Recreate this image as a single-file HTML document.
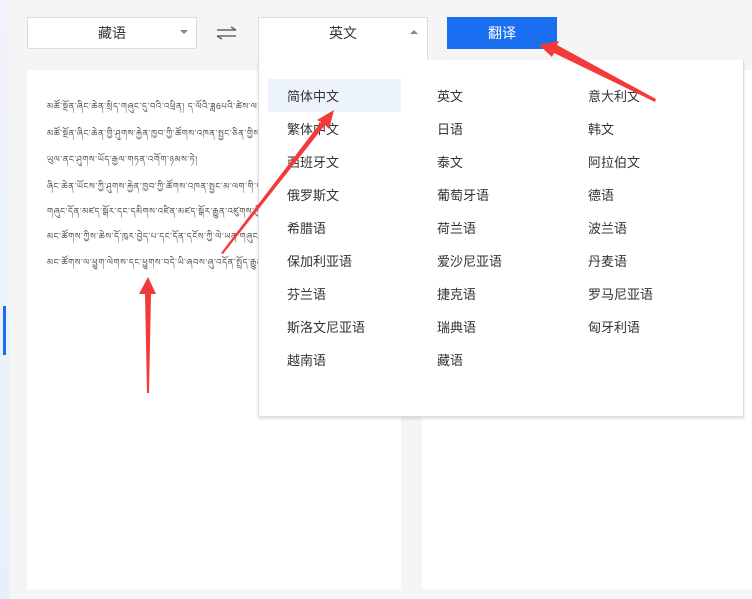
<!DOCTYPE html>
<html><head><meta charset="utf-8"><style>
body{margin:0;width:752px;height:599px;background:#f5f5f5;position:relative;overflow:hidden;font-family:"Liberation Sans","Noto Sans CJK SC",sans-serif;color:#333}
.a{position:absolute}
.sel{background:#fff;border:1px solid #ddd;box-sizing:border-box;font-size:14px;text-align:center;line-height:31px}
.tib{font-size:8.5px;color:#444;left:47px;white-space:nowrap;width:350px;overflow:hidden;letter-spacing:0.6px}
.it{position:absolute;font-size:13px;color:#333}
</style></head><body>
<div class="a" style="left:0;top:0;width:9px;height:599px;background:linear-gradient(#f0f3f8,#e6f0fb)"></div>
<div class="a" style="left:3px;top:306px;width:3px;height:49px;background:#1a6ff0"></div>
<div class="a sel" style="left:27px;top:17px;width:170px;height:32px">藏语</div>
<div class="a" style="left:180px;top:30px;border:4px solid transparent;border-top:4px solid #888;border-bottom:none"></div>
<svg class="a" style="left:216px;top:26px" width="22" height="14"><path d="M1 4H20M15 1L20 4M1 10H20M1 10L6 13" stroke="#666" stroke-width="1.6" fill="none"/></svg>
<div class="a sel" style="left:258px;top:17px;width:170px;height:44px;border-bottom:none;line-height:31px">英文</div>
<div class="a" style="left:410px;top:30px;border:4px solid transparent;border-bottom:4px solid #888;border-top:none"></div>
<div class="a" style="left:447px;top:17px;width:110px;height:32px;background:#1a6ff0;color:#fff;font-size:14px;text-align:center;line-height:32px">翻译</div>
<div class="a" style="left:27px;top:70px;width:374px;height:519px;background:#fff"></div>
<div class="a" style="left:422px;top:70px;width:330px;height:519px;background:#fff"></div>
<div class="a tib" style="top:98px">མཚོ་སྔོན་ཞིང་ཆེན་སྲིད་གཞུང་དུ་བའི་འཕྲིན། ད་ལོའི་ཟླ6པའི་ཚེས་ལ།</div>
<div class="a tib" style="top:125px">མཚོ་སྔོན་ཞིང་ཆེན་གྱི་ཤུགས་རྐྱེན་ཁྱབ་ཀྱི་ཚོགས་འཁན་སྤྱང་ཅིན་གྱིས་ཡུལ་ནང་</div>
<div class="a tib" style="top:151px">ཡུལ་ནང་ཤུགས་ཡོད་རྒྱལ་གཏན་འགོག་ཉམས་ཏེ།</div>
<div class="a tib" style="top:178px">ཞིང་ཆེན་ཡོངས་ཀྱི་ཤུགས་རྐྱེན་ཁྱབ་ཀྱི་ཚོགས་འཁན་སྤྱང་མ་ལག་གི་གཞུང་</div>
<div class="a tib" style="top:203px">གཞུང་དོན་མཛད་སྒོར་དང་དམིགས་འཛིན་མཛད་སྒོར་རྒྱུན་འཛུགས་ཀྱི་</div>
<div class="a tib" style="top:228px">མང་ཚོགས་ཀྱིས་ཆེས་དོ་ཁུར་བྱེད་པ་དང་དོན་དངོས་ཀྱི་ལེ་ཡན་གཞུང་དོན་</div>
<div class="a tib" style="top:254px">མང་ཚོགས་ལ་ཕྱུག་ལེགས་དང་ཕྱུགས་བདེ་ཡི་ཞབས་ཞུ་འདོན་སྤྲོད་རྒྱུན་</div>
<div class="a" style="left:258px;top:60px;width:486px;height:357px;background:#fff;border:1px solid #ddd;border-top:none;box-sizing:border-box;box-shadow:0 2px 3px rgba(0,0,0,.12)">
<div class="a" style="left:9px;top:19px;width:133px;height:33px;background:#ecf3fd"></div>
<div class="it" style="left:28px;top:26px">简体中文</div><div class="it" style="left:178px;top:26px">英文</div><div class="it" style="left:329px;top:26px">意大利文</div>
<div class="it" style="left:28px;top:59px">繁体中文</div><div class="it" style="left:178px;top:59px">日语</div><div class="it" style="left:329px;top:59px">韩文</div>
<div class="it" style="left:28px;top:92px">西班牙文</div><div class="it" style="left:178px;top:92px">泰文</div><div class="it" style="left:329px;top:92px">阿拉伯文</div>
<div class="it" style="left:28px;top:125px">俄罗斯文</div><div class="it" style="left:178px;top:125px">葡萄牙语</div><div class="it" style="left:329px;top:125px">德语</div>
<div class="it" style="left:28px;top:158px">希腊语</div><div class="it" style="left:178px;top:158px">荷兰语</div><div class="it" style="left:329px;top:158px">波兰语</div>
<div class="it" style="left:28px;top:191px">保加利亚语</div><div class="it" style="left:178px;top:191px">爱沙尼亚语</div><div class="it" style="left:329px;top:191px">丹麦语</div>
<div class="it" style="left:28px;top:224px">芬兰语</div><div class="it" style="left:178px;top:224px">捷克语</div><div class="it" style="left:329px;top:224px">罗马尼亚语</div>
<div class="it" style="left:28px;top:257px">斯洛文尼亚语</div><div class="it" style="left:178px;top:257px">瑞典语</div><div class="it" style="left:329px;top:257px">匈牙利语</div>
<div class="it" style="left:28px;top:290px">越南语</div><div class="it" style="left:178px;top:290px">藏语</div>
</div>
<svg class="a" style="left:0;top:0" width="752" height="599">
<g fill="#f23a3a">
<polygon points="147,393 149,393 151,294 156,294 148,277 139,294 145,294"/>
<polygon points="221,253 223,254 325,125 329,129 334,110 317,120 321,122"/>
<polygon points="655,102 656,99 557,45 559,41 539,45 552,57 554,53"/>
</g></svg>
</body></html>
